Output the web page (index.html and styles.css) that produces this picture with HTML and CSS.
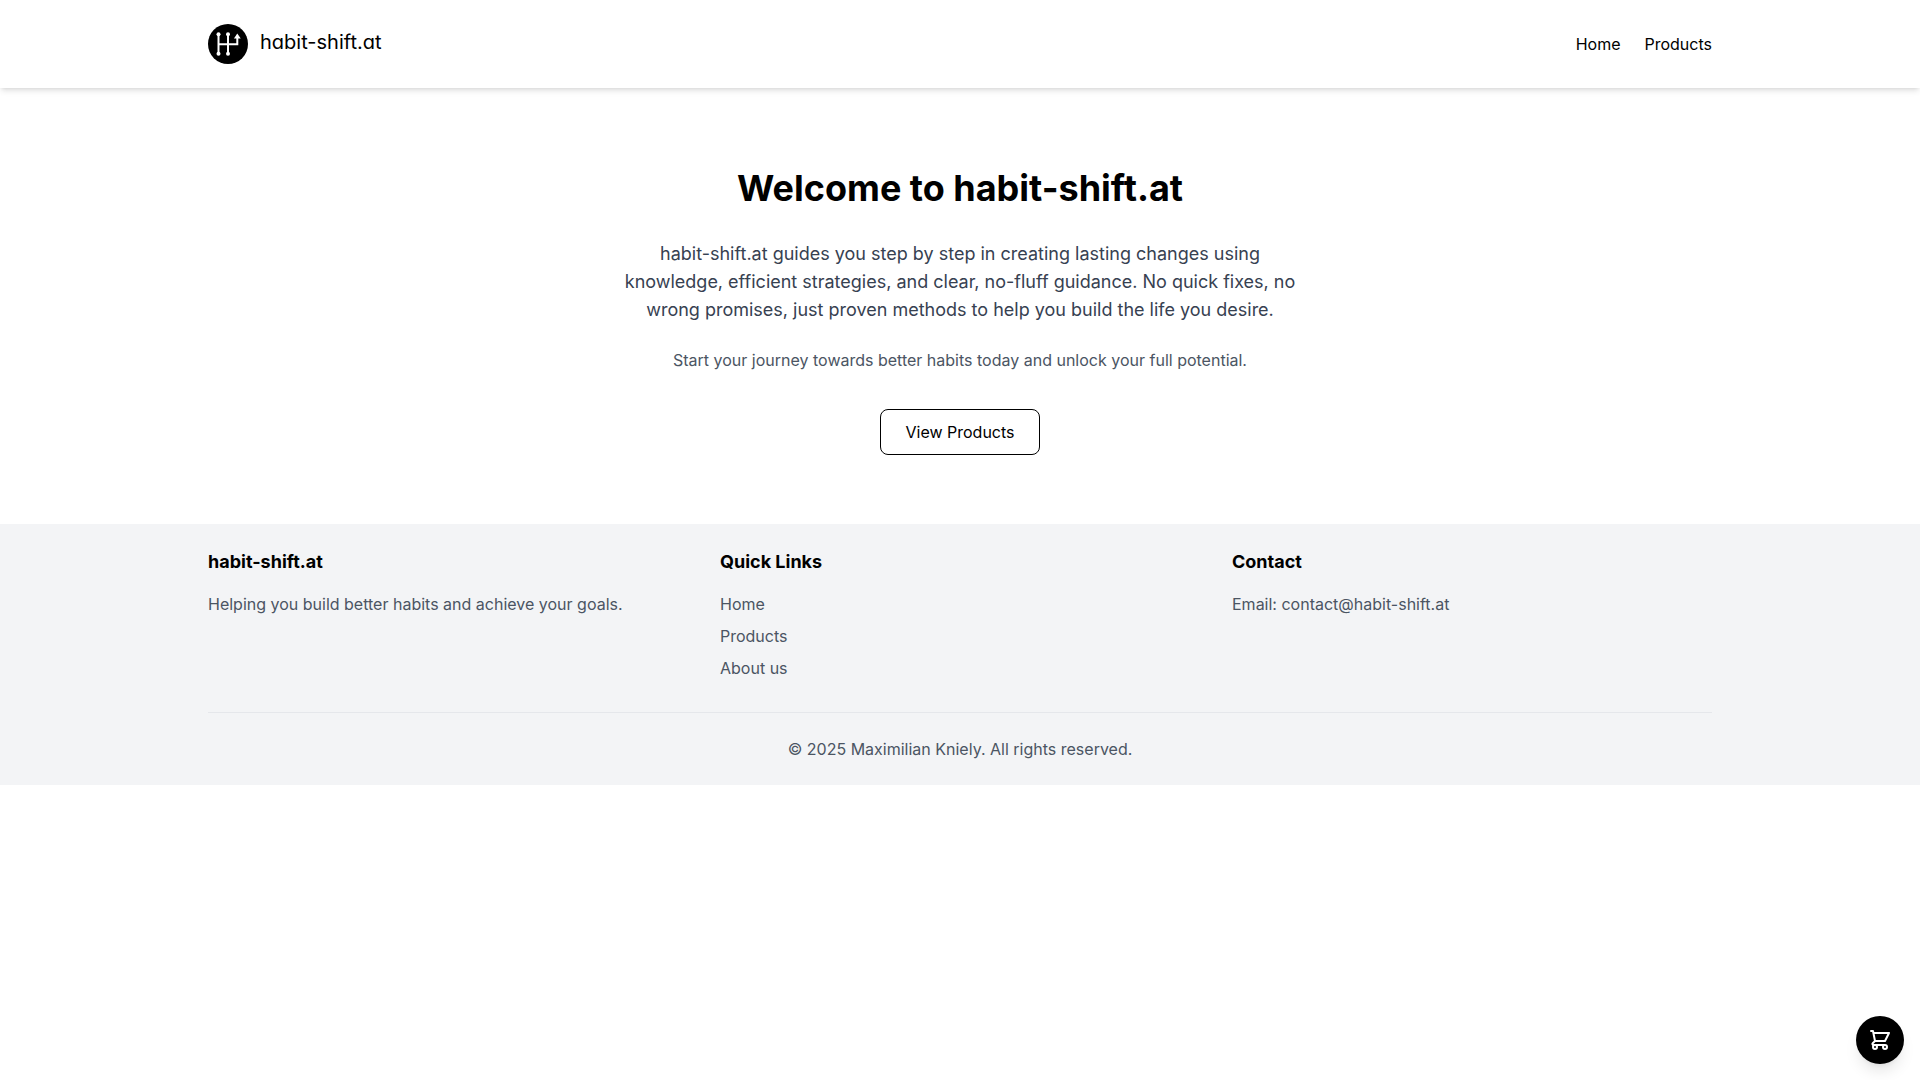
FILE: index.html
```html
<!doctype html>
<html lang="en">
<head>
    <meta charset="UTF-8">
    <meta name="viewport" content="width=device-width, initial-scale=1.0">
    <title>habit-shift.at</title>
    <link rel="stylesheet" href="styles.css">
</head>
<body>
    <header class="header">
        <div class="container header-inner">
            <a class="logo" href="#">
                <svg class="logo-mark" viewBox="0 0 40 40" aria-hidden="true">
                    <circle cx="20" cy="20" r="20"/>
                    <g fill="none" stroke="#fff" stroke-width="2">
                        <path d="M10.5 10.5v19M20 10.5v19M10.5 20.2h18.8v-7"/>
                    </g>
                    <g fill="#fff">
                        <circle cx="10.5" cy="10.3" r="2"/>
                        <circle cx="20" cy="10.3" r="2"/>
                        <circle cx="10.5" cy="29.7" r="2"/>
                        <circle cx="20" cy="29.7" r="2"/>
                        <path d="M29.3 9.6l3.4 4.8h-6.8z"/>
                    </g>
                </svg>
                <span class="logo-name">habit-shift.at</span>
            </a>
            <nav class="nav">
                <a href="#">Home</a>
                <a href="#products">Products</a>
            </nav>
        </div>
    </header>

    <main class="container hero">
        <h1>Welcome to habit-shift.at</h1>
        <p class="lead">habit-shift.at guides you step by step in creating lasting changes using knowledge, efficient strategies, and clear, no-fluff guidance. No quick fixes, no wrong promises, just proven methods to help you build the life you desire.</p>
        <p class="sub">Start your journey towards better habits today and unlock your full potential.</p>
        <a class="btn" href="#products">View Products</a>
    </main>

    <footer class="footer">
        <div class="container">
            <div class="footer-grid">
                <div>
                    <h3>habit-shift.at</h3>
                    <p>Helping you build better habits and achieve your goals.</p>
                </div>
                <div>
                    <h3>Quick Links</h3>
                    <ul class="links">
                        <li><a href="#">Home</a></li>
                        <li><a href="#products">Products</a></li>
                        <li><a href="#about">About us</a></li>
                    </ul>
                </div>
                <div>
                    <h3>Contact</h3>
                    <p>Email: contact@habit-shift.at</p>
                </div>
            </div>
            <div class="copyright">
                <p>© 2025 Maximilian Kniely. All rights reserved.</p>
            </div>
        </div>
    </footer>

    <button class="cart" type="button" aria-label="Open cart">
        <svg viewBox="0 0 24 24" fill="none" stroke="currentColor" stroke-width="2" stroke-linecap="round" stroke-linejoin="round" aria-hidden="true">
            <path d="M3 3h2l.4 2M7 13h10l4-8H5.4M7 13L5.4 5M7 13l-2.293 2.293c-.63.63-.184 1.707.707 1.707H17m0 0a2 2 0 100 4 2 2 0 000-4zm-8 2a2 2 0 11-4 0 2 2 0 014 0z"/>
        </svg>
    </button>
</body>
</html>
```
FILE: styles.css
```css
*{
    box-sizing: border-box;
    margin: 0;
    padding: 0;
}
body{
    font-family: Inter, "Liberation Sans", sans-serif;
    font-size: 16px;
    line-height: 24px;
    color: #000;
    background: #fff;
}
a{
    color: inherit;
    text-decoration: none;
}
ul{
    list-style: none;
}
.container{
    width: 100%;
    max-width: 1536px;
    margin: 0 auto;
    padding: 0 16px;
}

/* header */
.header{
    padding: 24px 0;
    background: #fff;
    box-shadow: 0 4px 6px -1px rgba(0,0,0,.1), 0 2px 4px -2px rgba(0,0,0,.1);
}
.header-inner{
    display: flex;
    justify-content: space-between;
    align-items: center;
}
.logo{
    display: flex;
    align-items: center;
    gap: 12px;
}
.logo-mark{
    display: block;
    width: 40px;
    height: 40px;
}
.logo-name{
    padding-bottom: 4px;
    font-size: 20px;
    line-height: 28px;
    /* single-storey a */
    font-feature-settings: "cv11";
}
.nav{
    display: flex;
    gap: 24px;
}

/* hero */
.hero{
    padding-top: 80px;
    padding-bottom: 80px;
    text-align: center;
}
.hero h1{
    margin-bottom: 32px;
    font-size: 36px;
    line-height: 40px;
    font-weight: 700;
}
.lead{
    max-width: 672px;
    margin: 0 auto 24px;
    font-size: 18px;
    line-height: 28px;
    color: #374151;
}
.sub{
    margin-bottom: 48px;
    color: #4b5563;
}
.btn{
    padding: 12px 24px;
    border: 1px solid #000;
    border-radius: 8px;
    background: #fff;
}

/* footer */
.footer{
    padding: 24px 0;
    background: #f3f4f6;
    color: #4b5563;
}
.footer-grid{
    display: grid;
    grid-template-columns: repeat(3, 1fr);
    gap: 32px;
}
.footer h3{
    margin-bottom: 16px;
    font-size: 18px;
    line-height: 28px;
    font-weight: 700;
    color: #000;
}
.links li + li{
    margin-top: 8px;
}
.copyright{
    margin-top: 32px;
    padding-top: 24px;
    border-top: 1px solid #e5e7eb;
    text-align: center;
}

/* floating cart button */
.cart{
    position: fixed;
    right: 16px;
    bottom: 16px;
    display: flex;
    align-items: center;
    justify-content: center;
    width: 48px;
    height: 48px;
    border: 0;
    border-radius: 50%;
    background: #000;
    color: #fff;
    box-shadow: 0 10px 15px -3px rgba(0,0,0,.1), 0 4px 6px -4px rgba(0,0,0,.1);
    cursor: pointer;
}
.cart svg{
    width: 24px;
    height: 24px;
}
```
